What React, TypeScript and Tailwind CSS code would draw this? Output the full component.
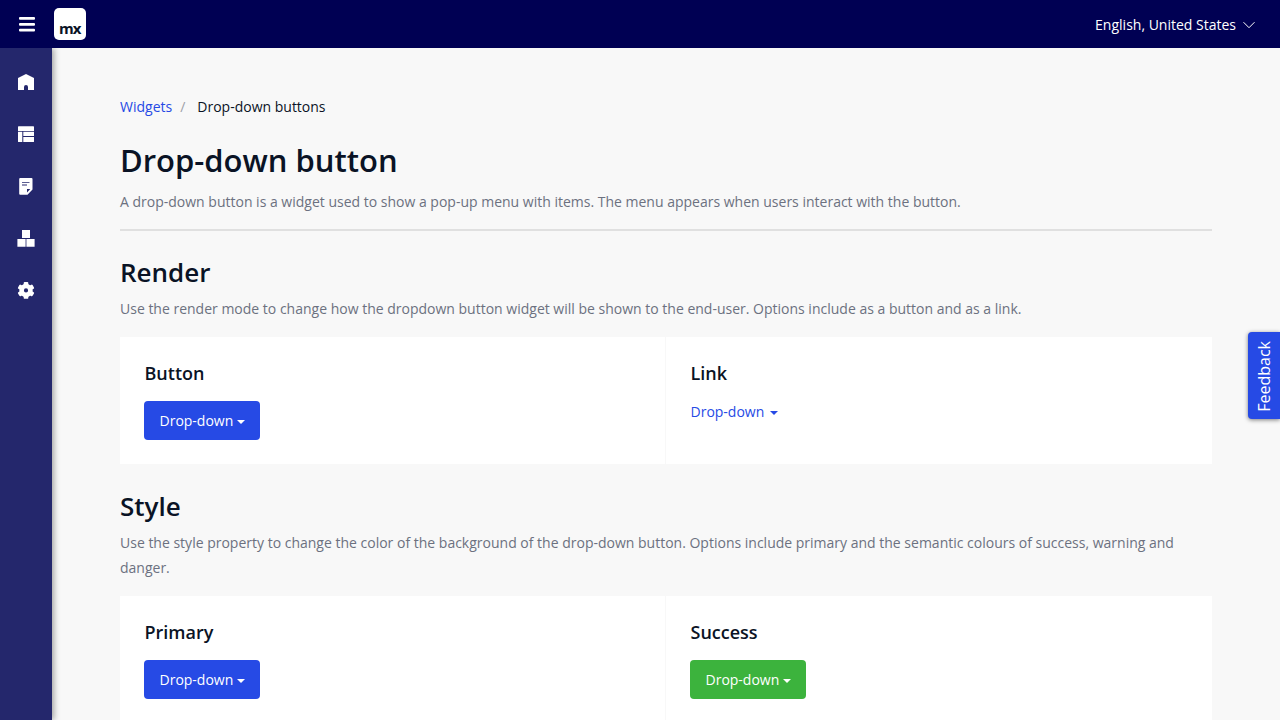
import React from "react";

type Tone = "primary" | "success";

const tones: Record<Tone, string> = {
  primary: "bg-[#264ae5]",
  success: "bg-[#3cb33d]",
};

function Caret({ className = "" }: { className?: string }) {
  return (
    <svg className={className} width="8" height="4" viewBox="0 0 8 4" fill="currentColor">
      <path d="M0 0h8L4 4z" />
    </svg>
  );
}

function DropButton({ tone }: { tone: Tone }) {
  return (
    <button className={`-ml-[0.5px] flex h-[39px] w-[116px] items-center rounded pl-[15.5px] text-[14px] text-white ${tones[tone]}`}>
      <span>Drop-down</span>
      <Caret className="mt-[3px] ml-[3.5px]" />
    </button>
  );
}

function Cell({ title, divided, children }: { title: string; divided?: boolean; children: React.ReactNode }) {
  return (
    <div className={`w-1/2 pt-6 pl-[24.5px] ${divided ? "border-r border-[#f8f8f8]" : ""}`}>
      <h4 className="h-10 text-[18px] leading-[25px] font-semibold">{title}</h4>
      {children}
    </div>
  );
}

function Section({ title, text, children }: { title: string; text: string; children: React.ReactNode }) {
  return (
    <section>
      <h2 className="text-[26px] leading-9 font-semibold">{title}</h2>
      <p className="mt-1.5 text-[14px] leading-[25px] text-[#6c7180]">{text}</p>
      {children}
    </section>
  );
}

const navIcons = [
  <path key="home" d="M8 0 16 4v12h-6v-3a2 2 0 0 0-4 0v3H0V4z" />,
  <path key="layout" d="M.6.3h14.8q.6 0 .6.6v4H0v-4q0-.6.6-.6zM0 5.8h4.3V16H.6q-.6 0-.6-.6zM5.3 5.8H16v4.1H5.3zM5.3 10.9H16v4.5q0 .6-.6.6H5.3z" />,
  <path key="note" fillRule="evenodd" d="M2.2 0h11.3q1 0 1 1v10.6L9.5 16.8H2.2q-1 0-1-1V1q0-1 1-1zM4 4.2v.9h7.5v-.9zM4 6.5v.9h5v-.9zM9 11v3.5L12.3 11z" />,
  <path key="blocks" d="M4 0h8v7.9H4zM-.6 8.9h8.2v7.8H-.6zM8.4 8.9h8.2v7.8H8.4z" />,
  <g key="gear" transform="translate(8 8.4)">
    <circle r="4.4" fill="none" stroke="white" strokeWidth="4.6" />
    <rect x="-2.3" y="-8.4" width="4.6" height="4.4" rx="0.9" />
    <rect x="-2.3" y="-8.4" width="4.6" height="4.4" rx="0.9" transform="rotate(60)" />
    <rect x="-2.3" y="-8.4" width="4.6" height="4.4" rx="0.9" transform="rotate(120)" />
    <rect x="-2.3" y="-8.4" width="4.6" height="4.4" rx="0.9" transform="rotate(180)" />
    <rect x="-2.3" y="-8.4" width="4.6" height="4.4" rx="0.9" transform="rotate(240)" />
    <rect x="-2.3" y="-8.4" width="4.6" height="4.4" rx="0.9" transform="rotate(300)" />
  </g>,
];

export default function App() {
  return (
    <div className="relative flex h-[720px] w-full flex-col overflow-hidden bg-[#f8f8f8] font-['Open_Sans',sans-serif] text-[#0a1325]">
      <header className="z-10 flex h-12 shrink-0 items-center bg-[#000053] text-white">
        <svg className="ml-[19px]" width="16" height="16" viewBox="0 0 16 16" fill="white">
          <rect y="1" width="16" height="2.8" rx="1" />
          <rect y="7" width="16" height="2.8" rx="1" />
          <rect y="12.7" width="16" height="2.8" rx="1" />
        </svg>
        <div className="ml-[19px] flex h-8 w-[31.5px] items-end justify-center rounded-[5px] bg-white">
          <span className="pb-[4px] text-[15px] leading-[16px] font-bold tracking-[-1px] text-[#0a1325]">mx</span>
        </div>
        <div className="mr-[25px] ml-auto flex items-center pt-0.5">
          <span className="text-[14px] leading-5">English, United States</span>
          <svg className="ml-[7px]" width="12" height="8" viewBox="0 0 12 8" fill="none" stroke="white">
            <path d="m.5 1.2 5.5 5.5 5.5-5.5" />
          </svg>
        </div>
      </header>
      <div className="flex min-h-0 flex-1">
        <nav className="flex w-[52px] shrink-0 flex-col items-center gap-9 bg-[#24276c] pt-[26px] shadow-[2px_0_6px_rgba(0,0,0,0.35)]">
          {navIcons.map((icon, i) => (
            <svg key={i} className="shrink-0 overflow-visible" width="16" height="16" viewBox="0 0 16 16" fill="white">
              {icon}
            </svg>
          ))}
        </nav>
        <main className="min-w-0 flex-1 pr-[68px] pl-[68px]">
          <div className="mt-[49px] flex h-5 text-[14px] leading-5">
            <a className="text-[#264ae5]">Widgets</a>
            <span className="ml-2 text-[#9da1a8]">/</span>
            <span className="ml-3">Drop-down buttons</span>
          </div>
          <h1 className="mt-[21px] text-[31px] leading-[44px] font-semibold">Drop-down button</h1>
          <p className="mt-[7px] text-[14px] leading-[25px] text-[#6c7180]">
            A drop-down button is a widget used to show a pop-up menu with items. The menu appears when users interact with the button.
          </p>
          <hr className="mt-[15px] mb-[23px] border-0 border-t-2 border-[#e0e0e0]" />
          <Section
            title="Render"
            text="Use the render mode to change how the dropdown button widget will be shown to the end-user. Options include as a button and as a link."
          >
            <div className="mt-4 mb-6 flex h-[127px] bg-white">
              <Cell title="Button" divided>
                <DropButton tone="primary" />
              </Cell>
              <Cell title="Link">
                <a className="flex items-center text-[14px] leading-[21px] text-[#264ae5]">
                  Drop-down
                  <Caret className="mt-[3px] ml-1.5" />
                </a>
              </Cell>
            </div>
          </Section>
          <Section
            title="Style"
            text="Use the style property to change the color of the background of the drop-down button. Options include primary and the semantic colours of success, warning and danger."
          >
            <div className="mt-4 flex h-[127px] bg-white">
              <Cell title="Primary" divided>
                <DropButton tone="primary" />
              </Cell>
              <Cell title="Success">
                <DropButton tone="success" />
              </Cell>
            </div>
          </Section>
        </main>
      </div>
      <button className="absolute top-[332px] right-0 flex h-[87px] w-8 items-center justify-center rounded-l bg-[#264ae5] pt-0.5 text-white shadow-[0_1px_4px_rgba(0,0,0,0.5)]">
        <span className="rotate-180 text-[16px] leading-5 [writing-mode:vertical-rl]">Feedback</span>
      </button>
    </div>
  );
}
